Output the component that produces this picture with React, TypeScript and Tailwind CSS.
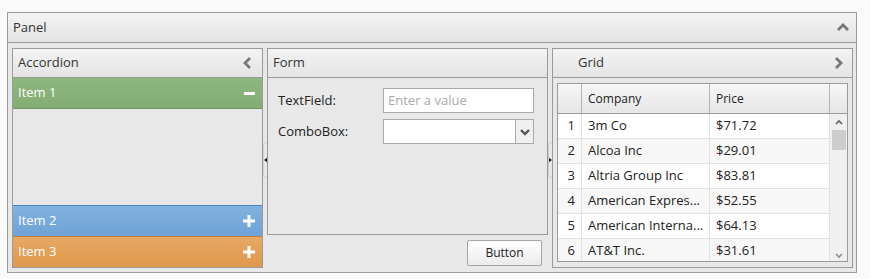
import React from 'react';

type Row = { id: number; company: string; price: string };

// names are cut short in the reference, same as the grid shows them
const rows: Row[] = [
  { id: 1, company: '3m Co', price: '$71.72' },
  { id: 2, company: 'Alcoa Inc', price: '$29.01' },
  { id: 3, company: 'Altria Group Inc', price: '$83.81' },
  { id: 4, company: 'American Expres...', price: '$52.55' },
  { id: 5, company: 'American Interna...', price: '$64.13' },
  { id: 6, company: 'AT&T Inc.', price: '$31.61' },
];

const Chevron = ({ dir }: { dir: 'up' | 'left' | 'right' | 'down' }) => {
  const d = {
    up: 'M2 9 L7 4 L12 9',
    left: 'M9 2 L4 7 L9 12',
    right: 'M5 2 L10 7 L5 12',
    down: 'M2 5 L7 10 L12 5',
  }[dir];
  return (
    <svg width="14" height="14" viewBox="0 0 14 14">
      <path d={d} fill="none" stroke="#777" strokeWidth="2.8" />
    </svg>
  );
};

const Splitter = ({ dir }: { dir: 'left' | 'right' }) => (
  <div className="w-[4px] flex items-center justify-center">
    <div className="h-[36px] w-[5px] shrink-0 border border-[#d0d0d0] rounded-[3px] flex items-center justify-center">
      <svg width="4" height="6" viewBox="0 0 4 6">
        <path d={dir === 'left' ? 'M4 0 L0 3 L4 6 Z' : 'M0 0 L4 3 L0 6 Z'} fill="#222" />
      </svg>
    </div>
  </div>
);

const SubHeader = ({ title, children, indent }: { title: string; children?: React.ReactNode; indent?: boolean }) => (
  <div className={`h-[29px] flex items-center justify-between border-b border-[#9a9a9a] bg-gradient-to-b from-[#f3f3f3] to-[#e4e4e4] pr-[7px] ${indent ? 'pl-[25px]' : 'pl-[5px]'}`}>
    <span className="text-[#333] text-[13px]">{title}</span>
    {children}
  </div>
);

const AccItem = ({ label, cls, open }: { label: string; cls: string; open?: boolean }) => (
  <div className={`h-[31px] flex items-center justify-between pl-[5px] pr-[7px] text-white text-[13px] ${cls}`}>
    <span>{label}</span>
    {open ? (
      <div className="w-[11px] h-[3px] bg-white" />
    ) : (
      <svg width="12" height="12" viewBox="0 0 12 12">
        <path d="M6 0 V12 M0 6 H12" stroke="#fff" strokeWidth="3" />
      </svg>
    )}
  </div>
);

export default function App() {
  return (
    <div className="w-[870px] h-[279px] bg-[#fafafa] pt-[12px] pl-[7px]" style={{ fontFamily: '"Open Sans", "Noto Sans", sans-serif' }}>
      <div className="w-[850px] h-[261px] border border-[#9a9a9a] flex flex-col bg-[#e8e8e8]">
        <div className="h-[30px] flex items-center justify-between border-b border-[#9a9a9a] bg-gradient-to-b from-[#f4f4f4] to-[#e3e3e3] pl-[5px] pr-[6px]">
          <span className="text-[#333] text-[13px]">Panel</span>
          <Chevron dir="up" />
        </div>
        <div className="flex-1 flex pt-[5px] pl-[4px]">
          {/* accordion */}
          <div className="w-[251px] h-[220px] border border-[#9a9a9a] flex flex-col">
            <SubHeader title="Accordion">
              <Chevron dir="left" />
            </SubHeader>
            <AccItem label="Item 1" open cls="bg-gradient-to-b from-[#8eb780] to-[#84ad74] border-b border-[#6e9a5e]" />
            <div className="flex-1 bg-[#e8e8e8]" />
            <AccItem label="Item 2" cls="bg-gradient-to-b from-[#81b2df] to-[#6ea3d6] border-t border-[#4a86c4]" />
            <AccItem label="Item 3" cls="bg-gradient-to-b from-[#e6a964] to-[#e0984c] border-t border-[#c77f38]" />
          </div>
          <Splitter dir="left" />
          {/* form */}
          <div className="w-[281px] h-[220px] flex flex-col">
            <div className="h-[187px] border border-[#9a9a9a] flex flex-col">
              <SubHeader title="Form" />
              <div className="flex-1 pt-[10px] pl-[10px] flex flex-col gap-[6px]">
                <div className="flex items-center h-[25px] text-[13px] text-[#222]">
                  <span className="w-[105px]">TextField:</span>
                  <div className="w-[151px] h-[25px] bg-white border border-[#a9a9a9] pl-[4px] flex items-center text-[#aaa]">
                    Enter a value
                  </div>
                </div>
                <div className="flex items-center h-[25px] text-[13px] text-[#222]">
                  <span className="w-[105px]">ComboBox:</span>
                  <div className="w-[151px] h-[25px] bg-white border border-[#a9a9a9] flex justify-end">
                    <div className="w-[18px] border-l border-[#a9a9a9] bg-[#f0f0f0] flex items-center justify-center">
                      <svg width="10" height="8" viewBox="0 0 10 8">
                        <path d="M1 2 L5 6 L9 2" fill="none" stroke="#555" strokeWidth="2.4" />
                      </svg>
                    </div>
                  </div>
                </div>
              </div>
            </div>
            <div className="flex justify-end pr-[6px] pt-[5px]">
              <button className="w-[75px] h-[26px] border border-[#a5a5a5] rounded-[2px] bg-gradient-to-b from-[#ffffff] to-[#ebebeb] text-[12px] text-[#222]">
                Button
              </button>
            </div>
          </div>
          <Splitter dir="right" />
          {/* grid */}
          <div className="w-[301px] h-[220px] border border-[#9a9a9a] flex flex-col">
            <SubHeader title="Grid" indent>
              <Chevron dir="right" />
            </SubHeader>
            <div className="flex-1 px-[4px] pt-[5px] pb-[5px]">
              <div className="h-[179px] border border-[#9a9a9a] bg-white flex flex-col overflow-hidden">
                <div className="h-[30px] shrink-0 flex border-b border-[#9a9a9a] bg-gradient-to-b from-[#f6f6f6] to-[#e6e6e6] text-[12px] text-[#222]">
                  <div className="w-[24px] border-r border-[#b5b5b5]" />
                  <div className="w-[128px] border-r border-[#b5b5b5] pl-[6px] flex items-center">Company</div>
                  <div className="w-[120px] border-r border-[#b5b5b5] pl-[6px] flex items-center">Price</div>
                  <div className="flex-1" />
                </div>
                <div className="flex flex-1">
                  <div className="w-[272px]">
                    {rows.map((r) => (
                      <div
                        key={r.id}
                        className={`h-[25px] flex border-b border-[#e2e2e2] text-[13px] text-[#222] ${r.id % 2 === 0 ? 'bg-[#f7f7f7]' : 'bg-white'}`}
                      >
                        <div className="w-[24px] border-r border-[#e2e2e2] pr-[6px] flex items-center justify-end">{r.id}</div>
                        <div className="w-[128px] border-r border-[#e2e2e2] pl-[6px] flex items-center whitespace-nowrap">{r.company}</div>
                        <div className="w-[120px] border-r border-[#e2e2e2] pl-[6px] flex items-center">{r.price}</div>
                      </div>
                    ))}
                  </div>
                  <div className="flex-1 bg-[#f0f0f0] flex flex-col items-center">
                    <div className="h-[16px] flex items-center">
                      <svg width="8" height="6" viewBox="0 0 8 6"><path d="M1 5 L4 2 L7 5" fill="none" stroke="#606060" strokeWidth="1.6" /></svg>
                    </div>
                    <div className="w-[14px] h-[20px] bg-[#cdcdcd]" />
                    <div className="flex-1" />
                    <div className="h-[16px] flex items-center">
                      <svg width="8" height="6" viewBox="0 0 8 6"><path d="M1 1 L4 4 L7 1" fill="none" stroke="#909090" strokeWidth="1.6" /></svg>
                    </div>
                  </div>
                </div>
              </div>
            </div>
          </div>
        </div>
      </div>
    </div>
  );
}
